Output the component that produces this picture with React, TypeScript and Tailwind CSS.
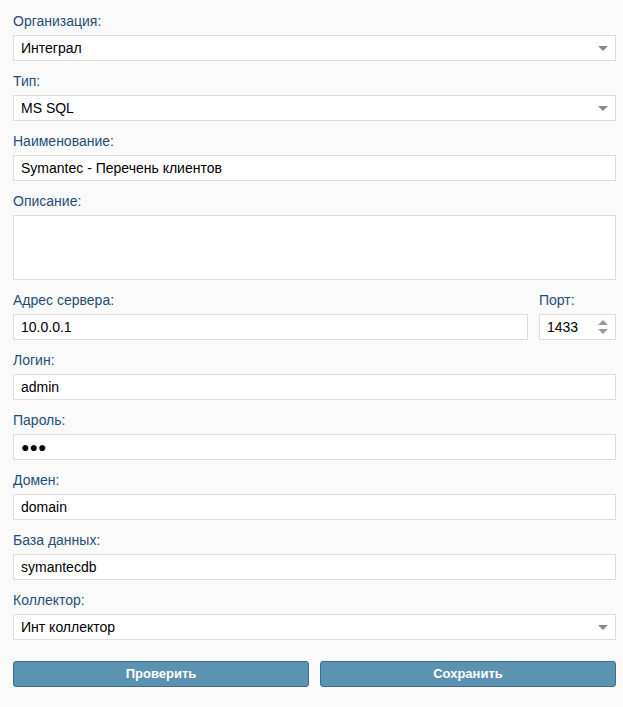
import React from 'react';

const font = { fontFamily: '"Liberation Sans", Arial, sans-serif' };

function Label({ children }: { children: React.ReactNode }) {
  return <div className="h-4 leading-4 text-[14px] text-[#1e4e79] mb-[6px]">{children}</div>;
}

function TextBox({ value, className = '' }: { value: string; className?: string }) {
  return (
    <div className={`h-[26px] border border-[#dddddd] bg-white flex items-center pl-[7px] text-[14px] text-black ${className}`}>
      {value}
    </div>
  );
}

function Select({ value }: { value: string }) {
  return (
    <div className="h-[26px] border border-[#dddddd] bg-white flex items-center justify-between pl-[7px] pr-[7px] text-[14px] text-black">
      <span>{value}</span>
      <svg width="10" height="5" viewBox="0 0 10 5">
        <path d="M0 0 H10 L5 5 Z" fill="#8a8a8a" />
      </svg>
    </div>
  );
}

export default function App() {
  return (
    <div className="w-[623px] h-[707px] bg-[#fafafa] pl-[13px] pr-[7px] pt-[13px]" style={font}>
      <div className="flex flex-col gap-3">
        <div>
          <Label>Организация:</Label>
          <Select value="Интеграл" />
        </div>
        <div>
          <Label>Тип:</Label>
          <Select value="MS SQL" />
        </div>
        <div>
          <Label>Наименование:</Label>
          <TextBox value="Symantec - Перечень клиентов" />
        </div>
        <div>
          <Label>Описание:</Label>
          <div className="h-[65px] border border-[#dddddd] bg-white" />
        </div>
        <div className="flex gap-[11px]">
          <div className="flex-1">
            <Label>Адрес сервера:</Label>
            <TextBox value="10.0.0.1" />
          </div>
          <div className="w-[77px]">
            <Label>Порт:</Label>
            <div className="h-[26px] border border-[#dddddd] bg-white flex items-center justify-between pl-[7px] pr-[7px] text-[14px] text-black">
              <span>1433</span>
              <svg width="10" height="14" viewBox="0 0 10 14">
                <path d="M5 0 L10 5 H0 Z" fill="#9a9a9a" />
                <path d="M0 9 H10 L5 14 Z" fill="#9a9a9a" />
              </svg>
            </div>
          </div>
        </div>
        <div>
          <Label>Логин:</Label>
          <TextBox value="admin" />
        </div>
        <div>
          <Label>Пароль:</Label>
          <TextBox value="●●●" className="text-[14px]" />
        </div>
        <div>
          <Label>Домен:</Label>
          <TextBox value="domain" />
        </div>
        <div>
          <Label>База данных:</Label>
          <TextBox value="symantecdb" />
        </div>
        <div>
          <Label>Коллектор:</Label>
          <Select value="Инт коллектор" />
        </div>
      </div>
      <div className="flex gap-[11px] mt-[21px]">
        <button className="flex-1 h-[26px] rounded-[3px] border border-[#3d6c8a] bg-[#5b93b0] text-white font-bold text-[13px]">
          Проверить
        </button>
        <button className="flex-1 h-[26px] rounded-[3px] border border-[#3d6c8a] bg-[#5b93b0] text-white font-bold text-[13px]">
          Сохранить
        </button>
      </div>
    </div>
  );
}
